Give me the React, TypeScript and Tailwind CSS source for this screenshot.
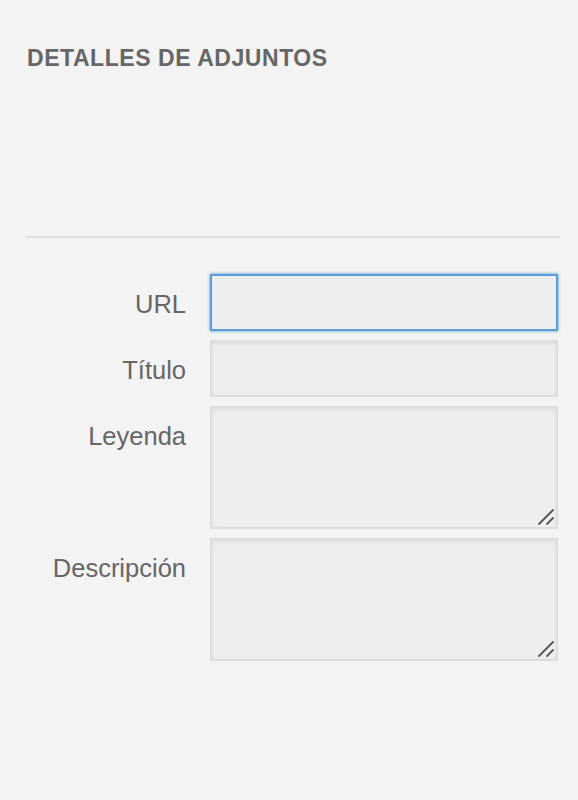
import React from "react";

const fieldBase =
  "w-full border-2 bg-[#eeeeee] outline-none text-[20px] text-[#333] px-2";

function ResizeGrip() {
  return (
    <svg
      width="18"
      height="18"
      viewBox="0 0 18 18"
      className="absolute right-[3px] bottom-[3px] pointer-events-none"
      aria-hidden="true"
    >
      <line x1="16" y1="2" x2="2" y2="16" stroke="#555" strokeWidth="1.8" strokeLinecap="round" />
      <line x1="16" y1="10" x2="10" y2="16" stroke="#555" strokeWidth="1.8" strokeLinecap="round" />
    </svg>
  );
}

/**
 * Attachment details panel — heading, divider, and label/field rows
 */
export default function App() {
  const rows: { label: string; kind: "input" | "textarea"; focused?: boolean }[] = [
    { label: "URL", kind: "input", focused: true },
    { label: "Título", kind: "input" },
    { label: "Leyenda", kind: "textarea" },
    { label: "Descripción", kind: "textarea" },
  ];

  return (
    <div
      className="min-h-[800px] w-full bg-[#f3f3f3] pl-[26px] pr-[20px] pt-[45px]"
      style={{ fontFamily: '"Liberation Sans", Arial, sans-serif' }}
    >
      {/* Header */}
      <h2 className="pl-px text-[23px] leading-[26px] font-bold tracking-[0.55px] text-[#666666] uppercase">
        Detalles de adjuntos
      </h2>

      <div className="h-[165px]" />
      <div className="h-[2px] bg-[#dddddd] mr-[-2px]" />

      {/* Fields */}
      <div className="flex flex-col gap-[9px] pt-[36px]">
        {rows.map((row) => (
          <label key={row.label} className="flex items-start gap-[24px]">
            <span className="w-[160px] shrink-0 text-right text-[25.5px] leading-[30px] pt-[15px] text-[#666666]">
              {row.label}
            </span>
            {row.kind === "input" ? (
              <input
                type="text"
                className={
                  fieldBase +
                  " h-[57px] " +
                  (row.focused
                    ? "border-[#5b9dd9] shadow-[0_0_3px_rgba(30,140,190,0.8)]"
                    : "border-[#dddddd] shadow-[inset_0_2px_4px_rgba(0,0,0,0.07)]")
                }
              />
            ) : (
              <div className="relative w-full flex">
                <textarea
                  className={
                    fieldBase +
                    " h-[123px] resize-none border-[#dddddd] shadow-[inset_0_2px_4px_rgba(0,0,0,0.07)]"
                  }
                />
                <ResizeGrip />
              </div>
            )}
          </label>
        ))}
      </div>
    </div>
  );
}
